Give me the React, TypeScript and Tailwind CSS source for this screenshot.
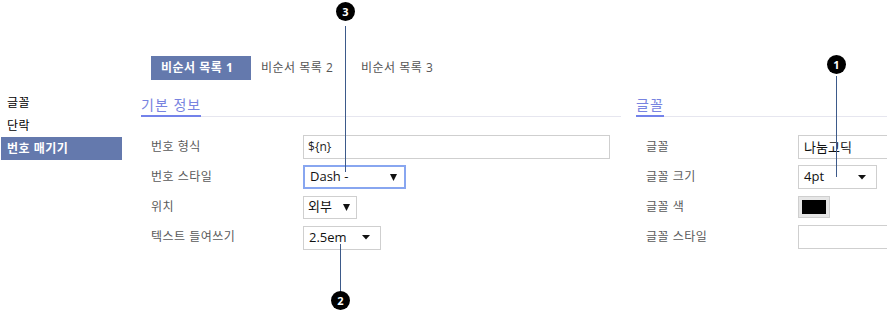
import React from "react";

const font = { fontFamily: '"Open Sans", "Noto Sans CJK KR", sans-serif' };

function Tall() {
  return (
    <svg width="7" height="8" viewBox="0 0 7 8" className="block">
      <path d="M0 1 L7 1 L3.5 8 Z" fill="#111" />
    </svg>
  );
}
function Flat() {
  return (
    <svg width="8" height="5" viewBox="0 0 8 5" className="block">
      <path d="M0 0 L8 0 L4 4.5 Z" fill="#111" />
    </svg>
  );
}

function Row({ label, children }: { label: string; children: React.ReactNode }) {
  return (
    <div className="flex items-center h-[24px]">
      <div className="w-[162px] shrink-0 pl-[10px] text-[12px] leading-[16px] tracking-[0.5px] text-[#5a5a5a]">{label}</div>
      {children}
    </div>
  );
}

function Header({ title }: { title: string }) {
  return (
    <div className="flex items-end h-[25px] border-b border-[#e6e6ef]">
      <span className="inline-block -mb-px border-b-2 border-[#7382ea] text-[14px] leading-[20px] tracking-[1px] text-[#7883e0]">
        {title}
      </span>
    </div>
  );
}

function Badge({ n }: { n: string }) {
  return (
    <div className="w-[19px] h-[19px] rounded-full bg-black text-white text-[11px] font-bold flex items-center justify-center leading-none">
      {n}
    </div>
  );
}

export default function App() {
  return (
    <div className="relative w-[887px] h-[311px] bg-white overflow-hidden" style={font}>
      <div className="flex">
        <div className="w-[121px] ml-px pt-[91px] shrink-0 text-[12px] tracking-[0.5px]">
          <div className="h-[23px] leading-[23px] px-[6px] text-black">글꼴</div>
          <div className="h-[23px] leading-[23px] px-[6px] text-black">단락</div>
          <div className="h-[23px] leading-[23px] px-[6px] bg-[#6479ad] text-white font-bold">번호 매기기</div>
        </div>
        <div className="ml-[19px] pt-[56px] flex-1 min-w-0">
          <div className="flex ml-[10px] h-[24px] text-[12px] tracking-[0.5px]">
            <div className="w-[100px] pl-[10px] bg-[#6479ad] text-white font-bold leading-[24px]">비순서 목록 1</div>
            <div className="w-[100px] pl-[10px] text-[#555] leading-[24px]">비순서 목록 2</div>
            <div className="w-[100px] pl-[10px] text-[#555] leading-[24px]">비순서 목록 3</div>
          </div>
          <div className="flex mt-[12px] gap-[15px]">
            <div className="w-[480px] shrink-0">
              <Header title="기본 정보" />
              <div className="mt-[18px] flex flex-col gap-[6px]">
                <Row label="번호 형식">
                  <div className="w-[307px] h-[24px] border border-[#cfcfcf] pl-[4px] text-[12px] leading-[22px] text-[#222]">${"{n}"}</div>
                </Row>
                <Row label="번호 스타일">
                  <div className="w-[103px] h-[24px] border-2 border-[#88a6f0] pl-[5px] pr-[7px] flex items-center justify-between text-[13px] text-[#111]">
                    <span>Dash -</span>
                    <Tall />
                  </div>
                </Row>
                <Row label="위치">
                  <div className="w-[54px] h-[23px] border border-[#cfcfcf] pl-[4px] pr-[6px] flex items-center justify-between text-[13px] text-[#111]">
                    <span>외부</span>
                    <Tall />
                  </div>
                </Row>
                <Row label="텍스트 들여쓰기">
                  <div className="w-[78px] h-[24px] mt-px border border-[#cfcfcf] pl-[5px] pr-[10px] flex items-center justify-between text-[13px] text-[#111]">
                    <span>2.5em</span>
                    <Flat />
                  </div>
                </Row>
              </div>
            </div>
            <div className="flex-1 min-w-0">
              <Header title="글꼴" />
              <div className="mt-[18px] flex flex-col gap-[6px]">
                <Row label="글꼴">
                  <div className="w-[150px] shrink-0 h-[24px] border border-[#cfcfcf] pl-[5px] text-[13px] leading-[22px] text-[#111]">나눔고딕</div>
                </Row>
                <Row label="글꼴 크기">
                  <div className="w-[79px] shrink-0 h-[24px] border border-[#cfcfcf] pl-[5px] pr-[10px] flex items-center justify-between text-[13px] text-[#111]">
                    <span>4pt</span>
                    <Flat />
                  </div>
                </Row>
                <Row label="글꼴 색">
                  <div className="w-[32px] shrink-0 h-[22px] border border-[#cfcfcf] bg-[#e6e6e6] p-[3px]">
                    <div className="w-full h-full bg-black" />
                  </div>
                </Row>
                <Row label="글꼴 스타일">
                  <div className="w-[150px] shrink-0 h-[24px] border border-[#cfcfcf]" />
                </Row>
              </div>
            </div>
          </div>
        </div>
      </div>

      {/* callouts */}
      <div className="absolute left-[336px] top-[2px]"><Badge n="3" /></div>
      <div className="absolute left-[345px] top-[26px] w-px h-[146px] bg-[#3d5a8a]" />
      <div className="absolute left-[340px] top-[244px] w-px h-[48px] bg-[#3d5a8a]" />
      <div className="absolute left-[331px] top-[291px]"><Badge n="2" /></div>
      <div className="absolute left-[827px] top-[55px]"><Badge n="1" /></div>
      <div className="absolute left-[836px] top-[76px] w-px h-[101px] bg-[#3d5a8a]" />
    </div>
  );
}
